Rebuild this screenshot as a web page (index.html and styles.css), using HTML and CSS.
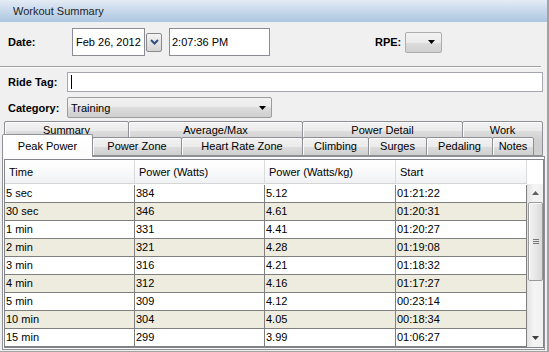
FILE: index.html
```html
<!doctype html>
<html lang="en">
<head>
	<meta charset="UTF-8">
	<title>Workout Summary</title>
	<link rel="stylesheet" href="styles.css">
</head>
<body>
<div class="window">
	<div class="titlebar">Workout Summary</div>

	<div class="row date-row">
		<span class="label date-label">Date:</span>
		<div class="field date">Feb 26, 2012</div>
		<div class="drop">
			<svg width="9" height="6" viewBox="0 0 9 6"><path d="M1 1l3.5 3.5L8 1" fill="none" stroke="#2f4f7e" stroke-width="2"/></svg>
		</div>
		<div class="field time">2:07:36 PM</div>
		<span class="label rpe-label">RPE:</span>
		<div class="combo rpe"><svg class="arrow" width="7" height="4" viewBox="0 0 7 4"><path d="M0 0h7L3.5 4z"/></svg></div>
	</div>

	<div class="sep"></div>

	<div class="row tag-row">
		<span class="label tag-label">Ride Tag:</span>
		<div class="field tag"><span class="caret"></span></div>
	</div>

	<div class="row cat-row">
		<span class="label tag-label">Category:</span>
		<div class="combo category">Training<svg class="arrow" width="7" height="4" viewBox="0 0 7 4"><path d="M0 0h7L3.5 4z"/></svg></div>
	</div>

	<div class="tabs">
		<div class="tabrow back">
			<div class="tab t-summary">Summary</div>
			<div class="tab t-avg">Average/Max</div>
			<div class="tab t-detail">Power Detail</div>
			<div class="tab t-work">Work</div>
		</div>
		<div class="tabrow front">
			<div class="tab active t-peak">Peak Power</div>
			<div class="tab t-zone">Power Zone</div>
			<div class="tab t-hrz">Heart Rate Zone</div>
			<div class="tab t-climb">Climbing</div>
			<div class="tab t-surges">Surges</div>
			<div class="tab t-pedal">Pedaling</div>
			<div class="tab t-notes">Notes</div>
		</div>
	</div>

	<div class="panel">
		<div class="pane">
			<table class="grid head">
				<colgroup><col class="c1"><col class="c2"><col class="c3"><col class="c4"></colgroup>
				<tr><th>Time</th><th>Power (Watts)</th><th>Power (Watts/kg)</th><th>Start</th></tr>
			</table>
			<div class="corner"></div>
			<div class="rows">
				<table class="grid body">
					<colgroup><col class="c1"><col class="c2"><col class="c3"><col class="c4"></colgroup>
					<tr><td>5 sec</td><td>384</td><td>5.12</td><td>01:21:22</td></tr>
					<tr class="alt"><td>30 sec</td><td>346</td><td>4.61</td><td>01:20:31</td></tr>
					<tr><td>1 min</td><td>331</td><td>4.41</td><td>01:20:27</td></tr>
					<tr class="alt"><td>2 min</td><td>321</td><td>4.28</td><td>01:19:08</td></tr>
					<tr><td>3 min</td><td>316</td><td>4.21</td><td>01:18:32</td></tr>
					<tr class="alt"><td>4 min</td><td>312</td><td>4.16</td><td>01:17:27</td></tr>
					<tr><td>5 min</td><td>309</td><td>4.12</td><td>00:23:14</td></tr>
					<tr class="alt"><td>10 min</td><td>304</td><td>4.05</td><td>00:18:34</td></tr>
					<tr><td>15 min</td><td>299</td><td>3.99</td><td>01:06:27</td></tr>
				</table>
			</div>
			<div class="scrollbar">
				<div class="sb-btn"><svg width="7" height="4" viewBox="0 0 7 4"><path d="M0 4h7L3.5 0z" fill="#606060"/></svg></div>
				<div class="thumb"><span class="grip"></span></div>
				<div class="sb-fill"></div>
				<div class="sb-btn"><svg width="7" height="4" viewBox="0 0 7 4"><path d="M0 0h7L3.5 4z" fill="#404040"/></svg></div>
			</div>
		</div>
	</div>
</div>
</body>
</html>
```

FILE: styles.css
```css
* {
	box-sizing: border-box;
}
body {
	margin: 0;
	font-family: "Liberation Sans", Arial, sans-serif;
	font-size: 11px;
	color: #000;
}
.window {
	width: 549px;
	height: 352px;
	background: #f0f0f0;
	border-right: 2px solid #a2a2a2;
	border-bottom: 1px solid #a2a2a2;
	overflow: hidden;
}
.titlebar {
	height: 22px;
	line-height: 22px;
	padding-left: 13px;
	color: #1e1e1e;
	background: linear-gradient(#e4ebf5, #adc6e1);
}

/* form rows */
.row {
	display: flex;
	align-items: center;
	padding-left: 8px;
}
.label {
	font-weight: bold;
}
.date-row {
	margin-top: 6px;
	height: 28px;
}
.date-label {
	width: 64px;
}
.field {
	height: 100%;
	display: flex;
	align-items: center;
	background: #fff;
	border: 1px solid #8a8d94;
}
.date {
	width: 73px;
	padding-left: 3px;
}
.drop {
	width: 16px;
	height: 19px;
	margin-left: 1px;
	display: flex;
	align-items: center;
	justify-content: center;
	border: 1px solid #8a8a8a;
	border-radius: 2px;
	background: linear-gradient(#f4f4f4, #e4e4e4 50%, #d4d4d4);
}
.time {
	width: 101px;
	margin-left: 7px;
	padding-left: 2px;
}
.rpe-label {
	margin-left: 105px;
}
.combo {
	height: 21px;
	display: flex;
	align-items: center;
	justify-content: space-between;
	padding: 0 5px 0 3px;
	border: 1px solid #acacac;
	border-radius: 2px;
	background: linear-gradient(#f2f2f2, #ebebeb 50%, #dddddd 50%, #cfcfcf);
}
.rpe {
	width: 37px;
	margin-left: 4px;
	justify-content: flex-end;
	padding-right: 6px;
}
.sep {
	margin: 10px 6px 0 0;
	border-top: 1px solid #a0a0a0;
	border-bottom: 1px solid #fff;
}
.tag-row {
	margin-top: 4px;
	height: 20px;
}
.tag-label {
	width: 59px;
}
.tag {
	width: 476px;
	border-color: #a4a7ad;
	padding-left: 3px;
}
.caret {
	width: 1px;
	height: 14px;
	background: #000;
}
.cat-row {
	margin-top: 5px;
	height: 21px;
}
.category {
	width: 205px;
	border-color: #9c9c9c;
}

/* tabs */
.tabs {
	margin-top: 3px;
}
.tabrow {
	display: flex;
}
.back {
	height: 16px;
	padding-left: 4px;
}
.back .tab {
	height: 35px;
}
.front {
	position: relative;
	height: 19px;
	padding-left: 2px;
}
.tab {
	height: 19px;
	margin-left: -1px;
	text-align: center;
	line-height: 17px;
	white-space: nowrap;
	overflow: hidden;
	border: 1px solid #8e9096;
	border-radius: 2px 2px 0 0;
	box-shadow: inset 1px 1px #fbfbfb;
	background: linear-gradient(#f2f2f2, #ebebeb 50%, #dddddd 50%, #cfcfcf);
}
.back .tab {
	background: linear-gradient(#f2f2f2, #ebebeb 9px, #dddddd 9px, #cfcfcf 19px, #cfcfcf);
}
.tabrow .tab:first-child {
	margin-left: 0;
}
.tab.active {
	position: relative;
	z-index: 1;
	height: 23px;
	margin-top: -3px;
	padding-top: 3px;
	border-bottom: none;
	box-shadow: none;
	background: linear-gradient(#ffffff, #fcfcfc);
}
.t-summary { width: 125px; }
.t-avg { width: 175px; }
.t-detail { width: 161px; }
.t-work { width: 81px; }
.t-peak { width: 91px; }
.t-zone { width: 90px; }
.t-hrz { width: 122px; }
.t-climb { width: 67px; }
.t-surges { width: 59px; }
.t-pedal { width: 67px; }
.t-notes { width: 42px; }

/* panel with table */
.panel {
	position: relative;
	width: 543px;
	height: 194px;
	margin-left: 2px;
	padding: 2px 0 0 1px;
	background: #fcfcfc;
	border: 1px solid #8e9096;
}
.pane {
	width: 540px;
	display: grid;
	grid-template-columns: 522px 16px;
	grid-template-rows: 24px 163px;
	border: 1px solid #82858b;
	background: #fff;
}
.grid {
	width: 522px;
	table-layout: fixed;
	border-collapse: separate;
	border-spacing: 0;
}
.c1, .c2 { width: 130px; }
.c3, .c4 { width: 131px; }
.head th {
	height: 24px;
	padding: 0 4px;
	font-weight: normal;
	text-align: left;
	white-space: nowrap;
	border-right: 1px solid #dadbdd;
	border-bottom: 1px solid #d5d5d5;
	background: linear-gradient(#ffffff, #f7f8f9 60%, #f0f1f3);
}
.corner {
	background: #fff;
}
.rows {
	padding-top: 1px;
	overflow: hidden;
}
.body td {
	height: 18px;
	padding: 0 1px;
	line-height: 17px;
	white-space: nowrap;
	border-right: 1px solid #7f7f7f;
	border-bottom: 1px solid #7f7f7f;
}
.body tr.alt td {
	background: #edecdf;
}

/* scrollbar */
.scrollbar {
	display: flex;
	flex-direction: column;
	border-left: 1px solid #e2e2e2;
	background: linear-gradient(90deg, #e6e6e6, #f4f4f4 40%, #f0f0f0);
}
.sb-btn {
	height: 18px;
	display: flex;
	align-items: center;
	justify-content: center;
}
.thumb {
	height: 79px;
	display: flex;
	align-items: center;
	justify-content: center;
	border: 1px solid #9a9a9a;
	border-radius: 2px;
	box-shadow: inset 1px 1px #fdfdfd;
	background: linear-gradient(90deg, #f2f2f2, #e8e8e8 50%, #d8d8d8);
}
.grip {
	width: 6px;
	height: 5px;
	border-top: 1px solid #777;
	border-bottom: 1px solid #777;
	background: linear-gradient(transparent 1px, #777 1px, #777 2px, transparent 2px);
}
.sb-fill {
	flex: 1;
}
```
